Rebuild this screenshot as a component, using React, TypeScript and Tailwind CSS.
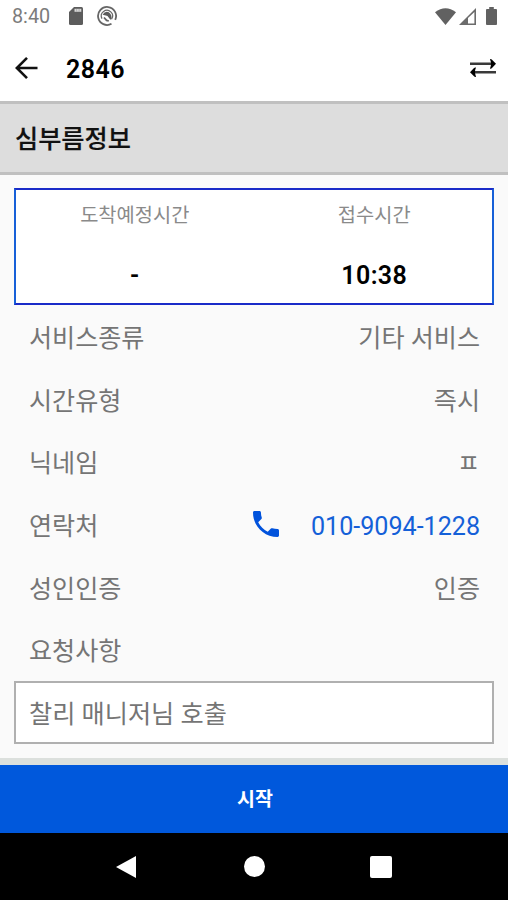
import React from 'react';

function StatusBar() {
  return (
    <div className="flex h-8 shrink-0 items-center justify-between bg-white pl-[12px] pr-[11px] text-[#7c7c7c]">
      <div className="flex items-center">
        <span className="w-[57px] pt-[2px] text-[19.8px] leading-[30px]">8:40</span>
        <svg className="h-[18px] w-[14px]" viewBox="0 0 14 18">
          <path fill="#5c5c5c" d="M5 0H12.5Q14 0 14 1.5V16.5Q14 18 12.5 18H1.5Q0 18 0 16.5V5Z" />
          <path fill="#d8d8d8" d="M5.5 1.8H12.3V4.8H5.5Z" />
          <path stroke="#aaa" strokeWidth="0.8" d="M7.6 2V4.8M10.1 2V4.8" />
        </svg>
        <svg className="ml-[14px] h-[20px] w-[20px]" viewBox="0 0 20 20" fill="none" stroke="#666">
          <path strokeWidth="1.8" d="M18.2 13.8A9 9 0 1 0 14.5 17.8" />
          <path strokeWidth="1.2" d="M5 12.6A5.6 5.6 0 1 1 14.6 13.1" />
          <path fill="#5c5c5c" stroke="none" d="M5.6 8.8Q8 4.6 11.8 6.2Q15.4 8.8 14.3 13.4L13.2 13.6L10.5 9.9L8.8 9.4Z" />
          <path strokeWidth="1.8" d="M7 11.5L9.6 14.4L11.8 15" />
        </svg>
      </div>
      <div className="flex items-center">
        <svg className="h-[17px] w-[21px]" viewBox="0 0 21 17">
          <path fill="#616161" d="M0 4.2Q10.5-3.8 21 4.2L10.5 17Z" />
        </svg>
        <svg className="ml-[3px] h-[17px] w-[17px]" viewBox="0 0 17 17">
          <path fill="#6c6c6c" fillRule="evenodd" d="M17 0V17H0ZM15.4 4L9 10V15.4H15.4Z" />
        </svg>
        <svg className="ml-[10px] h-[18px] w-[11px]" viewBox="0 0 12 18" preserveAspectRatio="none">
          <path fill="#616161" d="M3.5 0H8.5V2H11Q12 2 12 3V17Q12 18 11 18H1Q0 18 0 17V3Q0 2 1 2H3.5Z" />
        </svg>
      </div>
    </div>
  );
}

function Header() {
  return (
    <header className="flex h-[69px] shrink-0 items-center bg-white pl-[15px] pr-[12px] pt-[3px]">
      <svg className="h-[24px] w-[23px]" viewBox="0 0 23 24" fill="none" stroke="#111" strokeWidth="2.6">
        <path d="M12 1.8L1.8 12L12 22.2M2 12H22.5" />
      </svg>
      <h1 className="ml-[28px] flex-1 pt-[3px] text-[25px] font-semibold leading-[30px] tracking-[0.5px] text-black">2846</h1>
      <svg className="h-[20px] w-[26px]" viewBox="0 0 26 20">
        <path fill="none" stroke="#3a3a3a" strokeWidth="2.4" d="M0 5.8H22M4 14.2H26" />
        <path fill="#000" d="M20 1.2Q21 .7 22 1.7L26 5.8L22 10Q21 11 20 10.4Q22 6 20 1.2ZM6 9.6Q5 9 4 10L0 14.2L4 18.3Q5 19.3 6 18.8Q4 14 6 9.6Z" />
      </svg>
    </header>
  );
}

function TimeCell({ label, value }: { label: string; value: string }) {
  return (
    <div className="flex flex-1 flex-col items-center">
      <span className="mt-[11px] text-[19.8px] leading-[30px] text-[#8a8a8a]">{label}</span>
      <span className="mt-[30px] text-[25px] font-semibold leading-[30px] tracking-[0.4px] text-black">{value}</span>
    </div>
  );
}

function Row({ label, children }: { label: string; children?: React.ReactNode }) {
  return (
    <div className="flex h-[62.6px] shrink-0 items-center justify-between text-[25.1px] leading-[36px] text-[#757575]">
      <span className="pt-[6px]">{label}</span>
      {children}
    </div>
  );
}

function Value({ children }: { children: React.ReactNode }) {
  return <span className="-mr-px pt-[6px]">{children}</span>;
}

export default function App() {
  return (
    <div className="flex h-[900px] w-[508px] flex-col overflow-hidden bg-[#fafafa] font-[Roboto,'Noto_Sans_CJK_KR',sans-serif]">
      <StatusBar />
      <Header />
      <div className="flex h-[74px] shrink-0 items-center border-t-[3px] border-b-[3px] border-t-[#c0c0c0] border-b-[#c0c0c0] bg-[#dddddd] pl-[15px] pt-[3px]">
        <h2 className="text-[25.2px] font-medium leading-[36px] text-[#111] [-webkit-text-stroke:0.2px_#111]">심부름정보</h2>
      </div>
      <main className="flex flex-1 flex-col px-[14px] pt-[13px]">
        <section className="flex h-[117px] shrink-0 border-2 border-x-[#1760d8] border-y-[#1a2bc8] bg-white">
          <div className="flex flex-1 pl-px">
            <TimeCell label="도착예정시간" value="-" />
          </div>
          <div className="flex flex-1 pl-[4px]">
            <TimeCell label="접수시간" value="10:38" />
          </div>
        </section>
        <div className="flex h-[376px] shrink-0 flex-col px-[15px]">
          <Row label="서비스종류"><Value>기타 서비스</Value></Row>
          <Row label="시간유형"><Value>즉시</Value></Row>
          <Row label="닉네임"><Value>ㅍ</Value></Row>
          <Row label="연락처">
            <span className="flex items-center text-[#1460d8]">
              <svg className="mr-[32px] h-[26px] w-[26px]" viewBox="3 3 18 18" fill="#0052dc">
                <path d="M6.62 10.79c1.44 2.83 3.76 5.14 6.59 6.59l2.2-2.2c.27-.27.67-.36 1.02-.24 1.12.37 2.33.57 3.57.57.55 0 1 .45 1 1V20c0 .55-.45 1-1 1-9.39 0-17-7.61-17-17 0-.55.45-1 1-1h3.5c.55 0 1 .45 1 1 0 1.25.2 2.45.57 3.57.11.35.03.74-.25 1.02l-2.2 2.2z" />
              </svg>
              <Value>010-9094-1228</Value>
            </span>
          </Row>
          <Row label="성인인증"><Value>인증</Value></Row>
          <Row label="요청사항" />
        </div>
        <div className="flex h-[63px] shrink-0 items-center border-2 border-[#b0b0b0] bg-white pl-[13px] pt-[4px] text-[25.2px] leading-[36px] text-[#757575]">
          찰리 매니저님 호출
        </div>
      </main>
      <div className="h-[7px] shrink-0 bg-[#dce0dd]" />
      <button className="flex h-[68px] shrink-0 items-center justify-center bg-[#0058dc] pt-[2px] pl-[2px] text-[19.5px] font-bold leading-[30px] text-white">시작</button>
      <nav className="flex h-[67px] shrink-0 items-center justify-center bg-black">
        <div className="flex w-[127px] justify-center pr-[3px]">
          <svg className="h-[24px] w-[20px]" viewBox="0 0 20 24"><path fill="#fff" d="M20 1V23L0 12Z" /></svg>
        </div>
        <div className="flex w-[127px] justify-center"><div className="size-[21px] rounded-full bg-white" /></div>
        <div className="flex w-[127px] justify-center"><div className="size-[22px] rounded-[2px] bg-white" /></div>
      </nav>
    </div>
  );
}
